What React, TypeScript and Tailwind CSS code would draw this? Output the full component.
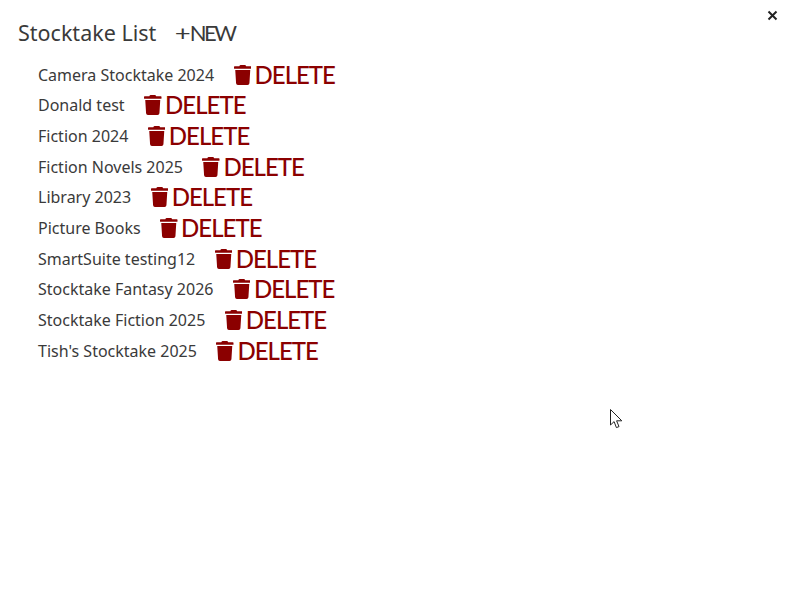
import { FaTrash } from "react-icons/fa";

const items: string[] = [
  "Camera Stocktake 2024",
  "Donald test",
  "Fiction 2024",
  "Fiction Novels 2025",
  "Library 2023",
  "Picture Books",
  "SmartSuite testing12",
  "Stocktake Fantasy 2026",
  "Stocktake Fiction 2025",
  "Tish's Stocktake 2025",
];

export default function App() {
  return (
    <div className="relative h-[595px] w-[797px] overflow-hidden bg-white font-['Noto_Sans',sans-serif] text-[#3a3a3a]">
      <header className="flex items-center pl-[18px] pt-[16px]">
        <h1 className="text-[21.5px] leading-[32px] font-normal">Stocktake List</h1>
        <button className="ml-[20px] flex items-center pt-[1px] font-['Lato',sans-serif] text-[22px] leading-[32px] font-normal tracking-[-2.4px]">
          <span className="inline-block scale-x-125">+</span>
          <span className="ml-[3px]">NEW</span>
        </button>
      </header>
      <ul className="mt-[10.5px] flex flex-col pl-[38px]">
        {items.map((name) => (
          <li key={name} className="flex h-[30.65px] items-center">
            <span className="text-[16px]">{name}</span>
            <button className="ml-[19.5px] flex items-center text-[#8b0000]">
              <FaTrash className="h-[20px] w-[17.5px]" />
              <span className="ml-[3.5px] font-['Lato',sans-serif] text-[24px] leading-none font-medium tracking-[-1px]">DELETE</span>
            </button>
          </li>
        ))}
      </ul>
      <button className="absolute left-[767px] top-[10px] text-[#222]">
        <svg width="11" height="11" viewBox="0 0 11 11"><path d="M1.5 1.5l8 8M9.5 1.5l-8 8" stroke="currentColor" strokeWidth="2" /></svg>
      </button>
      <svg className="absolute left-[610px] top-[409px]" width="13" height="20" viewBox="0 0 13 20">
        <path d="M.5.5v15.5l3.6-3.4 2.3 6 2.6-1-2.4-5.8h5.2z" fill="#fff" stroke="#222" strokeWidth="1" />
      </svg>
    </div>
  );
}
